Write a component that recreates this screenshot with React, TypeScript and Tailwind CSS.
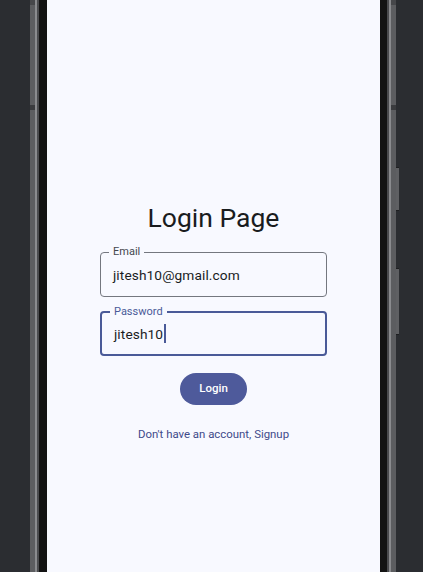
import React from 'react';

const font = { fontFamily: 'Roboto, "Noto Sans", sans-serif' };

function OutlinedField({ label, value, focused }: { label: string; value: string; focused?: boolean }) {
  return (
    <div
      className={
        'relative w-[227px] h-[45px] rounded-[4px] flex items-center px-[12px] ' +
        (focused ? 'border-2 border-[#4a5a98]' : 'border border-[#74777f]')
      }
    >
      <span
        className={
          'absolute left-[8px] top-[-8px] px-[4px] bg-[#f8f9ff] text-[11px] leading-[14px] ' +
          (focused ? 'text-[#4a5a98]' : 'text-[#44474e]')
        }
      >
        {label}
      </span>
      <span className="text-[13.7px] text-[#1a1c1e] tracking-[0.1px] leading-[20px] flex items-center">
        {value}
        {focused && <span className="inline-block w-[1.5px] h-[19px] bg-[#4a5a98] ml-[1px]"></span>}
      </span>
    </div>
  );
}

function App() {
  return (
    <div className="w-[423px] h-[572px] bg-[#2b2d31] flex overflow-hidden" style={font}>
      {/* left frame */}
      <div className="w-[30px] shrink-0"></div>
      <div className="w-[5px] shrink-0 bg-[#5c5d60] flex flex-col">
        <div className="h-[5px] bg-[#46474a]"></div>
        <div className="h-[100px]"></div>
        <div className="h-[5px] bg-[#3a3b3e]"></div>
      </div>
      <div className="w-[2px] shrink-0 bg-[#8a8b8e]"></div>
      <div className="w-[2px] shrink-0 bg-[#4a4b4e]"></div>
      <div className="w-[8px] shrink-0 bg-[#131313]"></div>

      {/* screen */}
      <div className="w-[333px] shrink-0 bg-[#f8f9ff] flex flex-col items-center pt-[200px]">
        <h1 className="text-[26.5px] leading-[35px] text-[#1a1c1e] font-normal mb-[17px]">Login Page</h1>
        <OutlinedField label="Email" value="jitesh10@gmail.com" />
        <div className="h-[14px]"></div>
        <OutlinedField label="Password" value="jitesh10" focused />
        <button className="mt-[17px] w-[67px] h-[32px] rounded-full bg-[#4e5a9b] text-white text-[11.5px] font-medium">
          Login
        </button>
        <p className="mt-[21px] text-[11.4px] text-[#3f4a8a] leading-[16px]">Don't have an account, Signup</p>
      </div>

      {/* right frame */}
      <div className="w-[7px] shrink-0 bg-[#131313]"></div>
      <div className="w-[2px] shrink-0 bg-[#4a4b4e]"></div>
      <div className="w-[2px] shrink-0 bg-[#8a8b8e]"></div>
      <div className="w-[5px] shrink-0 bg-[#5c5d60] flex flex-col">
        <div className="h-[5px] bg-[#46474a]"></div>
        <div className="h-[100px]"></div>
        <div className="h-[5px] bg-[#3a3b3e]"></div>
      </div>
      <div className="w-[3px] shrink-0 flex flex-col">
        <div className="h-[167px]"></div>
        <div className="h-[44px] bg-[#5f6063] border-y border-[#1e1f21]"></div>
        <div className="h-[57px]"></div>
        <div className="h-[67px] bg-[#5f6063] border-y border-[#1e1f21]"></div>
      </div>
    </div>
  );
}

export default App;
